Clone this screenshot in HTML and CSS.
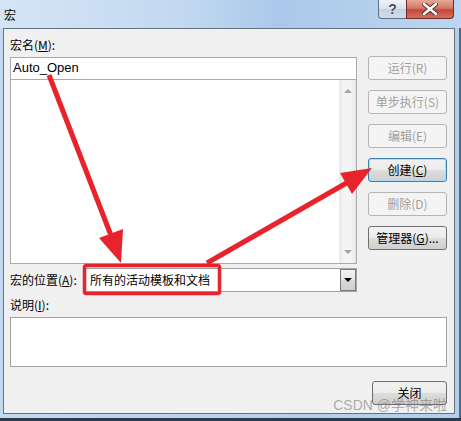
FILE: index.html
```html
<!DOCTYPE html>
<html lang="zh-CN">
<head>
    <meta charset="UTF-8">
    <title>宏</title>
    <link rel="stylesheet" href="styles.css">
</head>
<body>
<div class="window">
    <div class="titlebar">
        <span class="title">宏</span>
        <div class="caption">
            <span class="cap-help">?</span>
            <span class="cap-close">
                <svg width="16" height="12" viewBox="0 0 16 12">
                    <path d="M2 1 L14 11 M14 1 L2 11" stroke="#5a2a24" stroke-width="4.5" stroke-linecap="round"/>
                    <path d="M2 1 L14 11 M14 1 L2 11" stroke="#ffffff" stroke-width="2.6" stroke-linecap="round"/>
                </svg>
            </span>
        </div>
    </div>
    <div class="client">
        <div class="top">
            <div class="left">
                <div class="lbl lbl-name">宏名(<u>M</u>):</div>
                <div class="name-input">Auto_Open</div>
                <div class="list">
                    <div class="scroll">
                        <span class="arr up"></span>
                        <span class="arr down"></span>
                    </div>
                </div>
                <div class="loc-row">
                    <span class="lbl">宏的位置(<u>A</u>):</span>
                    <div class="combo">
                        <span class="combo-text">所有的活动模板和文档</span>
                        <span class="drop"><span class="tri"></span></span>
                    </div>
                </div>
            </div>
            <div class="right">
                <button class="btn disabled">运行(R)</button>
                <button class="btn disabled">单步执行(S)</button>
                <button class="btn disabled">编辑(E)</button>
                <button class="btn default">创建(<u>C</u>)</button>
                <button class="btn disabled">删除(D)</button>
                <button class="btn">管理器(<u>G</u>)...</button>
            </div>
        </div>
        <div class="lbl lbl-desc">说明(<u>I</u>):</div>
        <div class="desc"></div>
        <div class="footer">
            <button class="btn close-btn">关闭</button>
        </div>
    </div>

    <!-- red annotations drawn over the dialog -->
    <svg class="marks" width="461" height="421" viewBox="0 0 461 421">
        <rect x="84.5" y="265.5" width="135" height="28" rx="2" fill="none" stroke="#e8232b" stroke-width="3.5"/>
        <line x1="49" y1="75" x2="112" y2="238" stroke="#e8232b" stroke-width="5"/>
        <polygon points="121,263 123,229 99,238" fill="#e8232b"/>
        <line x1="207" y1="263" x2="350" y2="181" stroke="#e8232b" stroke-width="5"/>
        <polygon points="372,168 352,194 340,173" fill="#e8232b"/>
    </svg>
    <div class="watermark">CSDN @学神来啦</div>
</div>
</body>
</html>
```

FILE: styles.css
```css
body {
    margin: 0;
    padding: 0;
    font-family: "Noto Sans CJK SC", "Liberation Sans", sans-serif;
    font-size: 12px;
    color: #000;
}
u {
    text-decoration: underline;
    text-underline-offset: 1px;
}
.window {
    position: relative;
    width: 461px;
    height: 421px;
    overflow: hidden;
    background: linear-gradient(to right, #c3d9f2, #b6d0ee 60%, #b3cfee);
    box-shadow: inset 0 -3px 0 #2e3a48, inset -2px 0 0 #56667a;
}
.titlebar {
    display: flex;
    height: 28px;
    background: linear-gradient(to right, #d5e5f6, #c2d8f0 40%, #aac9ea 60%, #bcd5f1);
}
.title {
    padding: 7px 0 0 4px;
    line-height: 16px;
}
.caption {
    display: flex;
    margin-left: auto;
    margin-right: 7px;
    height: 19px;
}
.cap-help {
    width: 27px;
    height: 18px;
    border: 1px solid #5d6d82;
    border-top: none;
    border-right: none;
    border-radius: 0 0 0 4px;
    background: linear-gradient(#eef3f9, #d6e1ee 50%, #c3d2e4 51%, #cfdceb);
    color: #4a4f57;
    font-family: "Liberation Sans", sans-serif;
    font-weight: bold;
    font-size: 14px;
    line-height: 18px;
    text-align: center;
    text-shadow: 0 0 2px #fff;
}
.cap-close {
    display: flex;
    align-items: center;
    justify-content: center;
    width: 46px;
    height: 18px;
    border: 1px solid #6b2a24;
    border-top: none;
    border-radius: 0 0 4px 0;
    background: linear-gradient(#e7a897, #d47866 45%, #c4473a 55%, #d66f5b);
}
.client {
    box-sizing: border-box;
    width: 452px;
    height: 386px;
    margin-left: 3px;
    padding: 0 6px;
    border: 1px solid #65727f;
    background-color: #f0f0f0;
}
.top {
    display: flex;
    gap: 11px;
}
.left {
    width: 347px;
}
.lbl {
    line-height: 16px;
    white-space: nowrap;
}
.lbl-name {
    height: 28px;
    box-sizing: border-box;
    padding-top: 8px;
}
.name-input {
    box-sizing: border-box;
    height: 23px;
    border: 1px solid #a7abb0;
    background-color: #fff;
    padding-left: 2px;
    font-family: "Liberation Sans", sans-serif;
    font-size: 13px;
    line-height: 20px;
}
.list {
    box-sizing: border-box;
    display: flex;
    justify-content: flex-end;
    height: 184px;
    border: 1px solid #a7abb0;
    border-top: none;
    background-color: #fff;
}
.scroll {
    display: flex;
    flex-direction: column;
    justify-content: space-between;
    align-items: center;
    width: 17px;
    padding: 9px 0 9px;
    box-sizing: border-box;
    background: linear-gradient(to right, #e8e8e8, #f4f4f4 30%, #f4f4f4 70%, #e6e6e6);
}
.arr {
    width: 0;
    height: 0;
    border-left: 4px solid transparent;
    border-right: 4px solid transparent;
}
.arr.up {
    border-bottom: 4px solid #a3a3a3;
}
.arr.down {
    border-top: 4px solid #a3a3a3;
}
.loc-row {
    display: flex;
    align-items: center;
    justify-content: space-between;
    margin-top: 4px;
    height: 24px;
}
.combo {
    box-sizing: border-box;
    display: flex;
    align-items: center;
    width: 273px;
    height: 24px;
    border: 1px solid #a3a3a3;
    background-color: #fff;
}
.combo-text {
    flex: 1;
    padding-left: 5px;
    line-height: 16px;
}
.drop {
    box-sizing: border-box;
    display: flex;
    align-items: center;
    justify-content: center;
    width: 16px;
    height: 22px;
    border: 1px solid #7a7a7a;
    background: linear-gradient(#f4f4f4, #e6e6e6 50%, #d8d8d8 51%, #d0d0d0);
}
.tri {
    width: 0;
    height: 0;
    border-left: 4px solid transparent;
    border-right: 4px solid transparent;
    border-top: 4px solid #000;
}
.right {
    display: flex;
    flex-direction: column;
    gap: 10px;
    width: 79px;
    padding-top: 27px;
}
.btn {
    box-sizing: border-box;
    height: 24px;
    padding: 0;
    border: 1px solid #707070;
    border-radius: 3px;
    background: linear-gradient(#f2f2f2, #ebebeb 50%, #dddddd 51%, #cfcfcf);
    font-family: "Noto Sans CJK SC", "Liberation Sans", sans-serif;
    font-size: 12px;
    line-height: 16px;
    color: #000;
    cursor: pointer;
}
.btn.disabled {
    border-color: #b5b5b5;
    background: #f4f4f4;
    color: #a0a0a0;
}
.btn.default {
    border-color: #3c7fb1;
    box-shadow: inset 0 0 0 1px #a9dcf6;
}
.lbl-desc {
    height: 25px;
    box-sizing: border-box;
    padding-top: 5px;
}
.desc {
    box-sizing: border-box;
    width: 437px;
    height: 50px;
    border: 1px solid #a3a3a3;
    background-color: #fff;
}
.footer {
    display: flex;
    justify-content: flex-end;
    width: 437px;
    margin-top: 14px;
}
.close-btn {
    width: 75px;
}
.marks {
    position: absolute;
    top: 0;
    left: 0;
}
.watermark {
    position: absolute;
    top: 397px;
    right: 14px;
    color: rgba(110, 110, 110, 0.55);
    font-family: "Liberation Sans", "Noto Sans CJK SC", sans-serif;
    font-size: 14px;
    line-height: 16px;
    white-space: nowrap;
}
```
